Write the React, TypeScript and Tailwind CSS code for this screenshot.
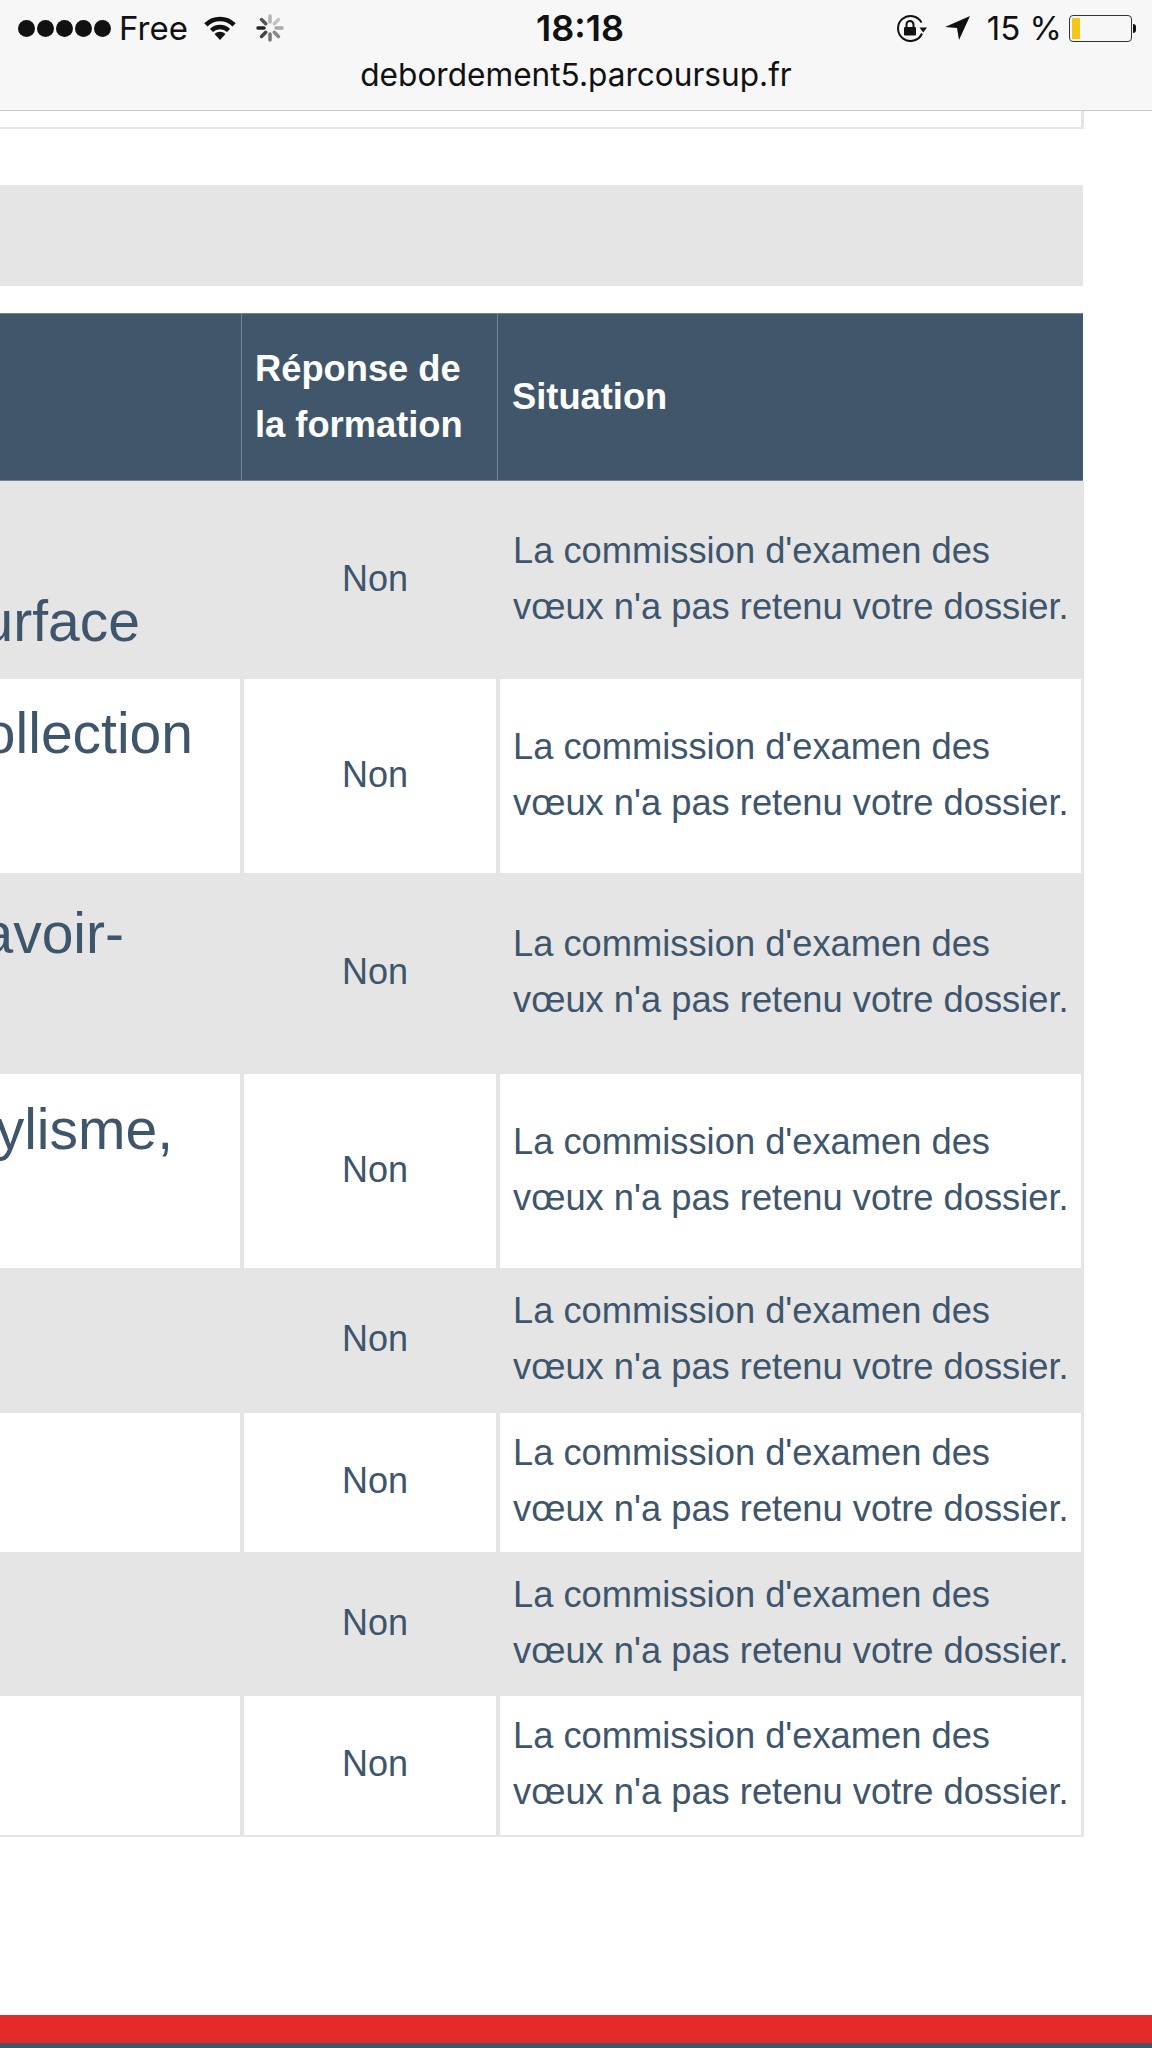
const sans = "font-['Liberation_Sans',Arial,sans-serif]";

type Row = {
  text: string;
  fragmentClass: string;
  heightClass: string;
  shaded: boolean;
};

const rows: Row[] = [
  { text: "surface", fragmentClass: "pr-[100px] pt-[100px]", heightClass: "h-[198px]", shaded: true },
  { text: "collection", fragmentClass: "pr-[47px] pt-[14px]", heightClass: "h-[194px]", shaded: false },
  { text: "savoir-", fragmentClass: "pr-[116px] pt-[20px]", heightClass: "h-[201px]", shaded: true },
  { text: "stylisme,", fragmentClass: "pr-[67px] pt-[15px]", heightClass: "h-[194px]", shaded: false },
  { text: "", fragmentClass: "", heightClass: "h-[145px]", shaded: true },
  { text: "", fragmentClass: "", heightClass: "h-[139px]", shaded: false },
  { text: "", fragmentClass: "", heightClass: "h-[144px]", shaded: true },
  { text: "", fragmentClass: "", heightClass: "h-[139px]", shaded: false },
];

function Wifi() {
  return (
    <svg width="34" height="25" viewBox="0 0 34 25" className="ml-[15px]">
      <path d="M2.9 8.9A20 20 0 0 1 31.1 8.9" fill="none" stroke="#111" strokeWidth="4.5" />
      <path d="M8.5 14.5A12 12 0 0 1 25.5 14.5" fill="none" stroke="#111" strokeWidth="4.5" />
      <path d="M17 24L11.5 18A8 8 0 0 1 22.5 18Z" fill="#111" />
    </svg>
  );
}

function Spinner() {
  const shades = ["#b5b5b5", "#c4c4c4", "#a8a8a8", "#8a8a8a", "#777", "#444", "#222", "#555"];
  return (
    <svg width="28" height="28" viewBox="0 0 28 28" className="ml-[19px]">
      {shades.map((shade, i) => (
        <line
          key={i}
          x1="14"
          y1="2"
          x2="14"
          y2="8"
          stroke={shade}
          strokeWidth="3.5"
          strokeLinecap="round"
          transform={`rotate(${i * 45} 14 14)`}
        />
      ))}
    </svg>
  );
}

function RotationLock() {
  return (
    <svg width="31" height="28" viewBox="0 0 31 28">
      <path d="M26 19.5A12.5 12.5 0 1 1 25.5 8.5" fill="none" stroke="#111" strokeWidth="2" />
      <path d="M23.5 13.5L31 13.5L27.2 18.5Z" fill="#111" />
      <rect x="8" y="13" width="12" height="8.5" rx="1" fill="#111" />
      <path d="M10.5 13V10.5A3.5 3.5 0 0 1 17.5 10.5V13" fill="none" stroke="#111" strokeWidth="2" />
    </svg>
  );
}

function LocationArrow() {
  return (
    <svg width="25" height="24" viewBox="0 0 25 24" className="ml-[18px]">
      <path d="M25 0L14 24L12 12L0 11Z" fill="#111" />
    </svg>
  );
}

function Battery() {
  return (
    <div className="ml-[7px] flex items-center">
      <div className="h-[27px] w-[63px] rounded-[4px] border border-[#333] p-[2px]">
        <div className="h-full w-[8px] bg-[#f5c518]" />
      </div>
      <div className="ml-[1px] h-[9px] w-[3px] rounded-r-full bg-[#111]" />
    </div>
  );
}

function BrowserBar() {
  return (
    <div className="h-[111px] border-b border-[#c9c9c9] bg-[#f7f7f8] text-[#111] font-['Inter',sans-serif]">
      <div className="flex h-[56px] items-center pl-[18px]">
        <div className="flex w-[518px] items-center">
          <div className="flex gap-[2px]">
            {[0, 1, 2, 3, 4].map((dot) => (
              <div key={dot} className="h-[17px] w-[17px] rounded-full bg-[#111]" />
            ))}
          </div>
          <span className="ml-[8px] text-[33px] leading-none">Free</span>
          <Wifi />
          <Spinner />
        </div>
        <span className="text-[36px] font-semibold leading-none">18:18</span>
        <div className="ml-auto flex items-center pr-[16px]">
          <RotationLock />
          <LocationArrow />
          <span className="ml-[17px] text-[33px] leading-none">15 %</span>
          <Battery />
        </div>
      </div>
      <div className="-mt-[2px] text-center text-[31.6px] leading-[42px]">debordement5.parcoursup.fr</div>
    </div>
  );
}

function HeaderRow() {
  return (
    <div className={`flex h-[168px] w-[1083px] border-y border-[#6f8497] bg-[#40566b] text-[36.3px] font-bold leading-[56px] text-white ${sans}`}>
      <div className="w-[242px] border-r border-[#6f8497]" />
      <div className="flex w-[256px] items-center border-r border-[#6f8497] pl-[13px]">
        <span>
          Réponse de
          <br />
          la formation
        </span>
      </div>
      <div className="flex flex-1 items-center pl-[14px]">Situation</div>
    </div>
  );
}

function TableRow({ row }: { row: Row }) {
  const edge = row.shaded ? "border-[#e5e5e5] bg-[#e5e5e5]" : "border-[#e5e5e5] bg-white";
  return (
    <div className={`flex w-[1084px] text-[#3e556c] ${sans} ${row.heightClass}`}>
      <div className={`w-[244px] overflow-hidden border-r-4 ${edge}`}>
        {row.text && (
          <div className={`flex justify-end whitespace-nowrap text-[57px] leading-[80px] ${row.fragmentClass}`}>
            {row.text}
          </div>
        )}
      </div>
      <div className={`flex w-[256px] items-center justify-center border-r-4 pb-[3px] pl-[10px] text-[36px] leading-[56px] ${edge}`}>
        Non
      </div>
      <div className={`flex flex-1 items-center whitespace-nowrap border-r-[3px] pb-[3px] pl-[13px] text-[36.3px] leading-[56px] ${edge}`}>
        <span>
          La commission d'examen des
          <br />
          vœux n'a pas retenu votre dossier.
        </span>
      </div>
    </div>
  );
}

export default function App() {
  return (
    <div className="flex h-[2048px] w-[1152px] flex-col overflow-hidden bg-white">
      <BrowserBar />
      <div className="h-[18px] w-[1084px] border-b-2 border-r-[3px] border-[#e5e5e5]" />
      <div className="mt-[56px] h-[101px] w-[1083px] bg-[#e5e5e5]" />
      <div className="mt-[27px]">
        <HeaderRow />
        {rows.map((row, i) => (
          <TableRow key={i} row={row} />
        ))}
        <div className="h-[2px] w-[1084px] bg-[#e5e5e5]" />
      </div>
      <div className="mt-auto h-[28px] bg-[#e52a2a]" />
      <div className="h-[5px] bg-[#3f5569]" />
    </div>
  );
}
